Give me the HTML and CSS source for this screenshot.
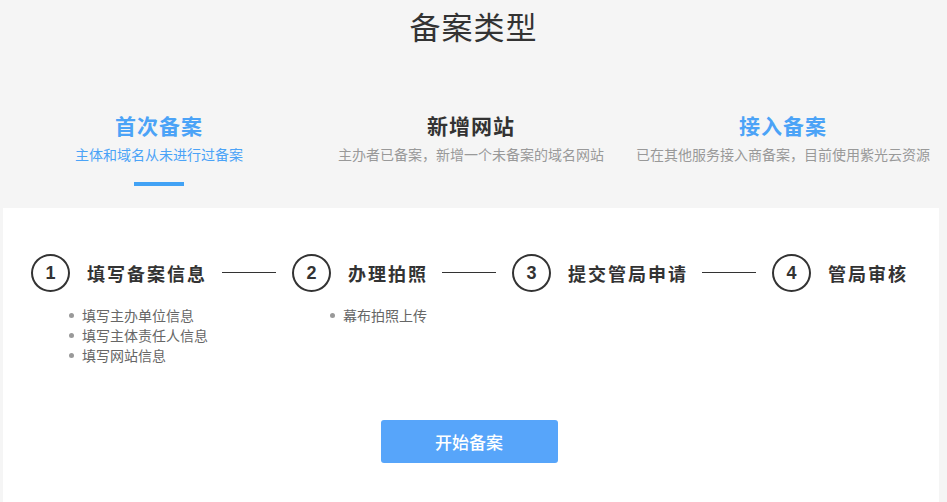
FILE: index.html
```html
<!DOCTYPE html>
<html lang="zh-CN">
<head>
  <meta charset="UTF-8">
  <meta name="viewport" content="width=device-width, initial-scale=1.0">
  <title>备案类型</title>
  <link rel="stylesheet" href="styles.css">
</head>
<body>
  <h1 class="page-title">备案类型</h1>

  <div class="tabs">
    <div class="tab active">
      <div class="tab-title">首次备案</div>
      <div class="tab-desc">主体和域名从未进行过备案</div>
      <div class="tab-bar"></div>
    </div>
    <div class="tab">
      <div class="tab-title">新增网站</div>
      <div class="tab-desc">主办者已备案，新增一个未备案的域名网站</div>
    </div>
    <div class="tab blue">
      <div class="tab-title">接入备案</div>
      <div class="tab-desc">已在其他服务接入商备案，目前使用紫光云资源</div>
    </div>
  </div>

  <div class="panel">
    <div class="steps">
      <div class="step">
        <div class="step-head">
          <span class="step-num">1</span>
          <span class="step-label">填写备案信息</span>
        </div>
        <ul class="step-list">
          <li>填写主办单位信息</li>
          <li>填写主体责任人信息</li>
          <li>填写网站信息</li>
        </ul>
      </div>
      <div class="step-line"></div>
      <div class="step">
        <div class="step-head">
          <span class="step-num">2</span>
          <span class="step-label">办理拍照</span>
        </div>
        <ul class="step-list">
          <li>幕布拍照上传</li>
        </ul>
      </div>
      <div class="step-line"></div>
      <div class="step">
        <div class="step-head">
          <span class="step-num">3</span>
          <span class="step-label">提交管局申请</span>
        </div>
      </div>
      <div class="step-line"></div>
      <div class="step">
        <div class="step-head">
          <span class="step-num">4</span>
          <span class="step-label">管局审核</span>
        </div>
      </div>
    </div>

    <div class="actions">
      <button class="start-btn">开始备案</button>
    </div>
  </div>
</body>
</html>
```

FILE: styles.css
```css
body {
  margin: 0;
  padding: 0;
  background-color: #f5f5f5;
  font-family: "Noto Sans CJK SC", "Noto Sans", sans-serif;
  color: #333;
}
.page-title {
  margin: 0;
  padding-top: 6px;
  height: 40px;
  line-height: 40px;
  font-size: 31px;
  font-weight: normal;
  letter-spacing: 1px;
  text-align: center;
  color: #333;
}
.tabs {
  display: grid;
  grid-template-columns: repeat(3, 1fr);
  margin: 64px 8px 0 3px;
  text-align: center;
}
.tab-title {
  font-size: 21px;
  font-weight: bold;
  letter-spacing: 1px;
  line-height: 30px;
  color: #333;
}
.tab-desc {
  margin-top: 4px;
  font-size: 14px;
  line-height: 20px;
  color: #999;
}
.tab.active .tab-title,
.tab.active .tab-desc,
.tab.blue .tab-title {
  color: #4ba3f7;
}
.tab-bar {
  width: 50px;
  height: 4px;
  margin: 18px auto 0;
  background-color: #41a2f5;
}
.panel {
  box-sizing: border-box;
  height: 294px;
  margin: 22px 8px 0 3px;
  padding: 46px 0 0 28px;
  background-color: #fff;
}
.steps {
  display: flex;
  align-items: flex-start;
}
.step-head {
  display: flex;
  align-items: center;
  gap: 17px;
}
.step-num {
  box-sizing: border-box;
  width: 39px;
  height: 38px;
  border: 2px solid #333;
  border-radius: 50%;
  display: flex;
  align-items: center;
  justify-content: center;
  font-family: "Liberation Sans", Arial, sans-serif;
  font-size: 18px;
  font-weight: bold;
}
.step-label {
  font-size: 18px;
  font-weight: bold;
  letter-spacing: 2px;
  color: #333;
}
.step-line {
  width: 54px;
  height: 1px;
  margin: 18px 16px 0 14px;
  background-color: #333;
}
.step-list {
  list-style: none;
  margin: 13px 0 0;
  padding: 0 0 0 38px;
  font-size: 14px;
  line-height: 20px;
  color: #666;
}
.step-list li {
  display: flex;
  align-items: center;
}
.step-list li::before {
  content: "";
  width: 5px;
  height: 5px;
  margin-right: 8px;
  border-radius: 50%;
  background-color: #999;
}
.actions {
  margin-top: 55px;
  padding-right: 32px;
  text-align: center;
}
.start-btn {
  width: 177px;
  height: 43px;
  border: none;
  border-radius: 3px;
  background-color: #57a5fa;
  color: #fff;
  font-family: "Noto Sans CJK SC", sans-serif;
  font-size: 17px;
  font-weight: 500;
  cursor: pointer;
}
```
